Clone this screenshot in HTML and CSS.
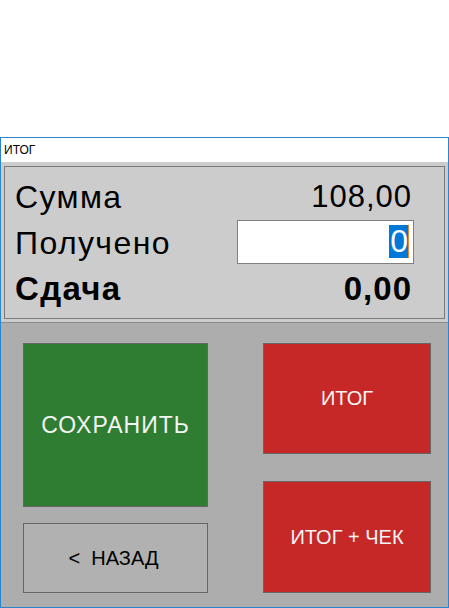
FILE: index.html
```html
<!DOCTYPE html>
<html lang="ru">
<head>
    <meta charset="UTF-8">
    <meta name="viewport" content="width=device-width, initial-scale=1.0">
    <title>Итог</title>
    <link rel="stylesheet" href="styles.css">
</head>
<body>
    <div class="window">
        <div class="titlebar">ИТОГ</div>
        <div class="totals">
            <div class="totals-box">
                <div class="row">
                    <span class="label">Сумма</span>
                    <span class="value">108,00</span>
                </div>
                <div class="row">
                    <span class="label">Получено</span>
                    <div class="field"><span class="selected">0</span></div>
                </div>
                <div class="row bold">
                    <span class="label">Сдача</span>
                    <span class="value">0,00</span>
                </div>
            </div>
        </div>
        <div class="actions">
            <div class="col left">
                <button class="btn green save">СОХРАНИТЬ</button>
                <button class="btn back">&lt;&nbsp; НАЗАД</button>
            </div>
            <div class="col right">
                <button class="btn red total">ИТОГ</button>
                <button class="btn red receipt">ИТОГ + ЧЕК</button>
            </div>
        </div>
    </div>
</body>
</html>
```

FILE: styles.css
```css
body {
    margin: 0;
    background: white;
    font-family: "Liberation Sans", Arial, sans-serif;
    color: black;
}
.window {
    margin-top: 137px;
    width: 449px;
    height: 471px;
    box-sizing: border-box;
    border: 1px solid #2b84d2;
    display: flex;
    flex-direction: column;
}
.titlebar {
    height: 24px;
    background: white;
    font-size: 12px;
    line-height: 24px;
    padding-left: 3px;
}
.totals {
    height: 160px;
    box-sizing: border-box;
    background: #cccccc;
    padding: 4px 3px 3px 3px;
}
.totals-box {
    height: 153px;
    box-sizing: border-box;
    border: 1px solid #7a7a7a;
    padding: 7px 30px 0 10px;
}
.row {
    height: 46px;
    display: flex;
    align-items: center;
    justify-content: space-between;
    font-size: 32px;
    letter-spacing: 1.4px;
}
.row.bold {
    font-weight: bold;
    font-size: 33px;
    letter-spacing: 1.3px;
}
.value {
    font-size: 31px;
    letter-spacing: 1px;
    padding-right: 2px;
}
.row.bold .value {
    font-size: 33px;
}
.field {
    width: 177px;
    height: 44px;
    box-sizing: border-box;
    background: white;
    border: 1px solid #808080;
    display: flex;
    align-items: center;
    justify-content: flex-end;
    padding-right: 4px;
    margin-top: -3px;
    letter-spacing: 0;
}
.selected {
    background: #0078d7;
    color: white;
    font-size: 32px;
    line-height: 33px;
    padding: 0 0 0 1px;
    border-right: 1px solid #e8892b;
}
.actions {
    flex: 1;
    background: #adadad;
    border-top: 1px solid #8c8c8c;
    display: flex;
    gap: 55px;
    padding: 20px 0 0 22px;
}
.col {
    display: flex;
    flex-direction: column;
}
.col.left {
    width: 185px;
    gap: 16px;
}
.col.right {
    width: 168px;
    gap: 27px;
}
.btn {
    font-family: "Liberation Sans", Arial, sans-serif;
    font-size: 20px;
    border: 1px solid #666666;
    color: #f4f4f4;
    padding: 0;
    margin: 0;
    width: 100%;
}
.green {
    background: #2e7d32;
}
.red {
    background: #c62828;
}
.save {
    height: 164px;
    font-size: 23px;
    letter-spacing: 1px;
}
.back {
    height: 70px;
    background: #b1b1b1;
    color: black;
    padding-right: 4px;
}
.total {
    height: 111px;
}
.receipt {
    height: 112px;
}
```
